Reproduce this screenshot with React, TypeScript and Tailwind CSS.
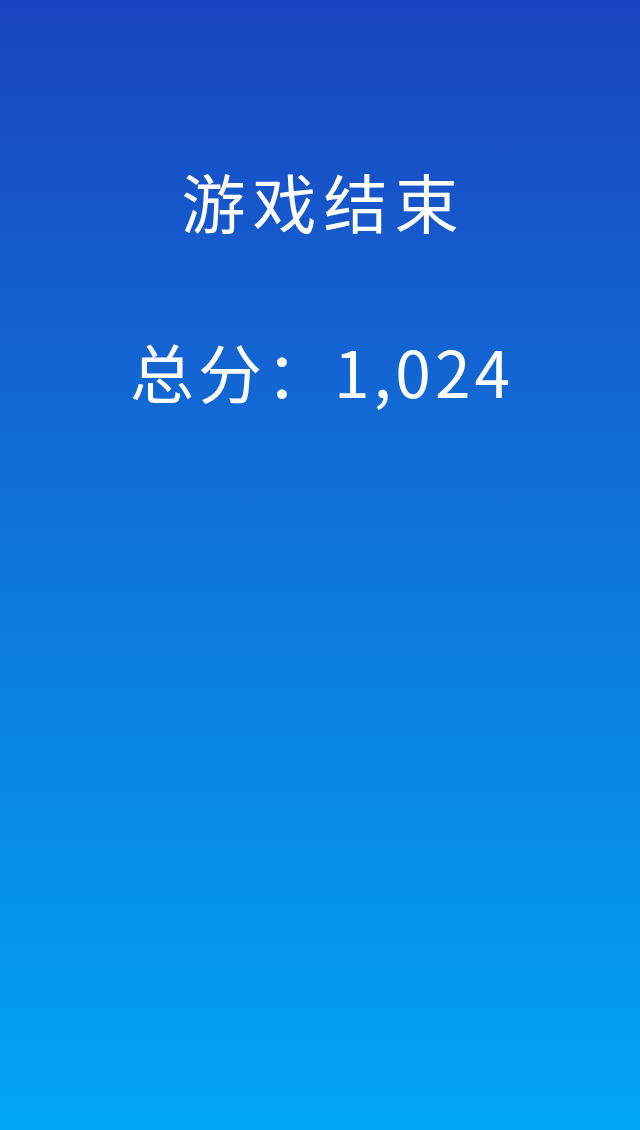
export default function App() {
  return (
    <div
      className="w-[640px] h-[1130px] bg-linear-to-b from-[#1a43c0] to-[#03a6f5] flex flex-col items-center text-white"
      style={{ fontFamily: '"Noto Sans CJK SC", "Noto Sans", sans-serif' }}
    >
      <div className="mt-[160px] text-[64px] leading-[80px] tracking-[7px] pl-[7px]">游戏结束</div>
      <div className="mt-[90px] text-[64px] leading-[80px] tracking-[4px] pl-[4px]">总分：1,024</div>
    </div>
  );
}
